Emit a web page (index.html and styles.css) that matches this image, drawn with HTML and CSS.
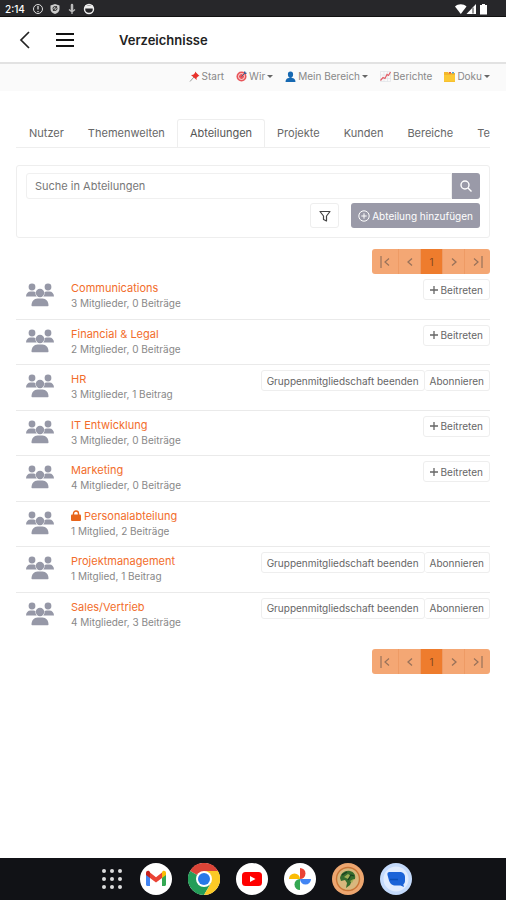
FILE: index.html
```html
<!DOCTYPE html>
<html lang="de">
<head>
    <meta charset="UTF-8">
    <meta name="viewport" content="width=device-width, initial-scale=1">
    <title>Verzeichnisse</title>
    <link rel="stylesheet" href="styles.css">
</head>
<body>
    <svg class="sprite" aria-hidden="true">
        <symbol id="group" viewBox="0 0 28 24">
            <circle cx="6" cy="4" r="3.4"/>
            <circle cx="22" cy="4" r="3.4"/>
            <path d="M0 13.500c0-3 2-5 4.500-5h3c.7 0 1.400.2 2 .5-.3 1.800.2 3.500 1.400 4.500zM28 13.500c0-3-2-5-4.500-5h-3c-.7 0-1.400.2-2 .5.3 1.800-.2 3.500-1.400 4.500z"/>
            <circle cx="14" cy="10" r="4.200"/>
            <path d="M5.500 22.500c0-4 2.500-7 6-7h5c3.500 0 6 3 6 7 0 .5-.3.800-.8.800H6.300c-.5 0-.8-.3-.8-.8z"/>
        </symbol>
        <symbol id="plus" viewBox="0 0 8 8">
            <path d="M4 0v8M0 4h8" fill="none" stroke="currentColor" stroke-width="1.300"/>
        </symbol>
        <symbol id="first" viewBox="0 0 12 12">
            <path d="M2 0v12M10 2.500L6 6l4 3.500" fill="none" stroke="currentColor" stroke-width="1.200"/>
        </symbol>
        <symbol id="prev" viewBox="0 0 12 12">
            <path d="M8 2.500L4 6l4 3.500" fill="none" stroke="currentColor" stroke-width="1.300"/>
        </symbol>
        <symbol id="next" viewBox="0 0 12 12">
            <path d="M4 2.500L8 6 4 9.500" fill="none" stroke="currentColor" stroke-width="1.300"/>
        </symbol>
        <symbol id="last" viewBox="0 0 12 12">
            <path d="M10 0v12M2 2.500L6 6 2 9.500" fill="none" stroke="currentColor" stroke-width="1.200"/>
        </symbol>
    </svg>

    <div class="statusbar">
        <span class="clock">2:14</span>
        <svg width="12" height="12" viewBox="0 0 12 12" fill="none" stroke="#ddd"><circle cx="6" cy="6" r="4.500"/><path d="M6 3v3.500M6 8v1" stroke-width="1.300"/></svg>
        <svg width="12" height="12" viewBox="0 0 12 12"><path d="M6 1l4.500 1.500V6c0 2.500-2 4.300-4.500 5-2.500-.7-4.500-2.500-4.500-5V2.500z" fill="#ccc"/><circle cx="6" cy="5.500" r="2" fill="none" stroke="#333"/><path d="M4 8l4-5" stroke="#333"/></svg>
        <svg width="12" height="12" viewBox="0 0 12 12" fill="none" stroke="#bbb"><path d="M6 2v5" stroke-width="2.500" stroke-linecap="round"/><path d="M3 6.500L6 9l3-2.500M6 9v2" stroke-width="1.300"/></svg>
        <svg width="12" height="12" viewBox="0 0 12 12"><circle cx="6" cy="6" r="4.500" fill="none" stroke="#eee" stroke-width="1.400"/><path d="M2 2.500h8V5.500H2z" fill="#eee"/></svg>
        <svg class="signals" width="34" height="12" viewBox="0 0 34 12" fill="#fff"><path d="M0 3.500c3-3 8.500-3 11.500 0L5.800 11z"/><path d="M21 1v10H11.500z"/><path d="M18 4.500v6" stroke="#777" stroke-width="1.500"/><path d="M27 1h3v1h2v9.500h-7V2h2z"/></svg>
    </div>

    <header class="appbar">
        <button type="button" aria-label="Zurück">
            <svg width="12" height="18" viewBox="0 0 12 18" fill="none" stroke="#222" stroke-width="1.700"><path d="M11 1L3 9l8 8"/></svg>
        </button>
        <button type="button" aria-label="Menü">
            <svg width="18" height="18" viewBox="0 0 18 18" stroke="#111" stroke-width="2"><path d="M0 3h18M0 9h18M0 15h18"/></svg>
        </button>
        <h1>Verzeichnisse</h1>
    </header>

    <nav class="topnav">
        <a href="#">
            <svg width="11" height="11" viewBox="0 0 11 11"><path d="M5 6L1 10.500" stroke="#999"/><path d="M6 .5L10.500 5l-1.300.3-1.700 1.600.2 2.100L2 4l2.200-.2L6 2z" fill="#e8322b"/></svg>
            Start
        </a>
        <a href="#">
            <svg width="11" height="11" viewBox="0 0 11 11"><circle cx="5.500" cy="5.500" r="5" fill="#e8555a"/><circle cx="5.500" cy="5.500" r="3" fill="none" stroke="#fff" stroke-width=".8"/><path d="M5.500 5.500L9 2" stroke="#4c5f86"/><path d="M8 3V1l1-1 .5 1.500L11 2l-1 1z" fill="#3d5a91"/></svg>
            Wir <i class="caret"></i>
        </a>
        <a href="#">
            <svg width="11" height="11" viewBox="0 0 11 11" fill="#1769b2"><path d="M5.500.5c1.800 0 2.700 1.200 2.600 3C8 5.500 7 7 5.500 7S3 5.500 2.900 3.500C2.800 1.700 3.700.5 5.500.5z"/><path d="M.5 11c0-2.800 1.600-3.700 3.500-4h3c1.900.3 3.500 1.200 3.500 4z"/></svg>
            Mein Bereich <i class="caret"></i>
        </a>
        <a href="#">
            <svg width="11" height="11" viewBox="0 0 11 11" fill="none"><path d="M.5.500h10v10H.5zM.5 4h10M.5 7.500h10M4 .5v10M7.500.5v10" stroke="#dfe3e6" stroke-width=".7"/><path d="M.5 9.500L3 6.500l2 1 2-4 1.500 1L10.500 1" stroke="#e2606a" stroke-width="1.200"/></svg>
            Berichte
        </a>
        <a href="#">
            <svg width="11" height="11" viewBox="0 0 11 11"><path d="M0 1h4l1 1h6v9H0z" fill="#f3b72c"/><path d="M5 1h2v1.500H5z" fill="#e05252"/><path d="M8 1h2v1.500H8z" fill="#53a5d8"/><path d="M0 4h11v6.500H0z" fill="#fbc935"/></svg>
            Doku <i class="caret"></i>
        </a>
    </nav>

    <main>
        <nav class="tabs">
            <a href="#">Nutzer</a>
            <a href="#">Themenwelten</a>
            <a href="#" class="active">Abteilungen</a>
            <a href="#">Projekte</a>
            <a href="#">Kunden</a>
            <a href="#">Bereiche</a>
            <a href="#">Te</a>
        </nav>

        <form class="search">
            <div class="search-field">
                <input type="text" placeholder="Suche in Abteilungen" aria-label="Suche in Abteilungen">
                <button type="submit" aria-label="Suchen">
                    <svg width="12" height="12" viewBox="0 0 12 12" fill="none" stroke="#fff" stroke-width="1.400"><circle cx="5" cy="5" r="4"/><path d="M8 8l3.500 3.500"/></svg>
                </button>
            </div>
            <div class="search-actions">
                <button type="button" class="filter" aria-label="Filter">
                    <svg width="12" height="12" viewBox="0 0 12 12" fill="none" stroke="#444" stroke-width="1.200" stroke-linejoin="round"><path d="M1 1.500h10L7.500 6v5l-3-1.500V6z"/></svg>
                </button>
                <button type="button" class="add">
                    <svg width="12" height="12" viewBox="0 0 12 12" fill="none" stroke="#fff"><circle cx="6" cy="6" r="5.200"/><path d="M6 3.300v5.400M3.300 6h5.400"/></svg>
                    Abteilung hinzufügen
                </button>
            </div>
        </form>

        <nav class="pages" aria-label="Seiten">
            <a href="#" class="end" aria-label="Erste"><svg width="12" height="12"><use href="#first"/></svg></a>
            <a href="#" aria-label="Vorherige"><svg width="12" height="12"><use href="#prev"/></svg></a>
            <a href="#" class="current">1</a>
            <a href="#" aria-label="Nächste"><svg width="12" height="12"><use href="#next"/></svg></a>
            <a href="#" class="end" aria-label="Letzte"><svg width="12" height="12"><use href="#last"/></svg></a>
        </nav>

        <ul class="groups">
            <li>
                <svg class="group-icon"><use href="#group"/></svg>
                <div class="info"><a href="#">Communications</a><p>3 Mitglieder, 0 Beiträge</p></div>
                <div class="actions"><button type="button" class="join"><svg width="8" height="8"><use href="#plus"/></svg>Beitreten</button></div>
            </li>
            <li>
                <svg class="group-icon"><use href="#group"/></svg>
                <div class="info"><a href="#">Financial &amp; Legal</a><p>2 Mitglieder, 0 Beiträge</p></div>
                <div class="actions"><button type="button" class="join"><svg width="8" height="8"><use href="#plus"/></svg>Beitreten</button></div>
            </li>
            <li>
                <svg class="group-icon"><use href="#group"/></svg>
                <div class="info"><a href="#">HR</a><p>3 Mitglieder, 1 Beitrag</p></div>
                <div class="actions"><button type="button">Gruppenmitgliedschaft beenden</button><button type="button">Abonnieren</button></div>
            </li>
            <li>
                <svg class="group-icon"><use href="#group"/></svg>
                <div class="info"><a href="#">IT Entwicklung</a><p>3 Mitglieder, 0 Beiträge</p></div>
                <div class="actions"><button type="button" class="join"><svg width="8" height="8"><use href="#plus"/></svg>Beitreten</button></div>
            </li>
            <li>
                <svg class="group-icon"><use href="#group"/></svg>
                <div class="info"><a href="#">Marketing</a><p>4 Mitglieder, 0 Beiträge</p></div>
                <div class="actions"><button type="button" class="join"><svg width="8" height="8"><use href="#plus"/></svg>Beitreten</button></div>
            </li>
            <li>
                <svg class="group-icon"><use href="#group"/></svg>
                <div class="info"><a href="#"><svg width="10" height="11" viewBox="0 0 10 11"><path d="M2.500 5V3.500a2.500 2.500 0 015 0V5" fill="none" stroke="#e8651a" stroke-width="1.400"/><rect y="4.500" width="10" height="6.500" rx="1" fill="#e8651a"/></svg>Personalabteilung</a><p>1 Mitglied, 2 Beiträge</p></div>
            </li>
            <li>
                <svg class="group-icon"><use href="#group"/></svg>
                <div class="info"><a href="#">Projektmanagement</a><p>1 Mitglied, 1 Beitrag</p></div>
                <div class="actions"><button type="button">Gruppenmitgliedschaft beenden</button><button type="button">Abonnieren</button></div>
            </li>
            <li>
                <svg class="group-icon"><use href="#group"/></svg>
                <div class="info"><a href="#">Sales/Vertrieb</a><p>4 Mitglieder, 3 Beiträge</p></div>
                <div class="actions"><button type="button">Gruppenmitgliedschaft beenden</button><button type="button">Abonnieren</button></div>
            </li>
        </ul>

        <nav class="pages" aria-label="Seiten">
            <a href="#" class="end" aria-label="Erste"><svg width="12" height="12"><use href="#first"/></svg></a>
            <a href="#" aria-label="Vorherige"><svg width="12" height="12"><use href="#prev"/></svg></a>
            <a href="#" class="current">1</a>
            <a href="#" aria-label="Nächste"><svg width="12" height="12"><use href="#next"/></svg></a>
            <a href="#" class="end" aria-label="Letzte"><svg width="12" height="12"><use href="#last"/></svg></a>
        </nav>
    </main>

    <footer class="dock">
        <!-- All apps -->
        <svg width="24" height="32" viewBox="4 0 24 32" fill="#ddd"><circle cx="8" cy="8" r="2"/><circle cx="16" cy="8" r="2"/><circle cx="24" cy="8" r="2"/><circle cx="8" cy="16" r="2"/><circle cx="16" cy="16" r="2"/><circle cx="24" cy="16" r="2"/><circle cx="8" cy="24" r="2"/><circle cx="16" cy="24" r="2"/><circle cx="24" cy="24" r="2"/></svg>
        <!-- Mail -->
        <svg width="32" height="32" viewBox="0 0 32 32"><circle cx="16" cy="16" r="16" fill="#fff"/><path d="M6 11l4 3v9H7.500C6.600 23 6 22.400 6 21.500z" fill="#4285f4"/><path d="M26 11l-4 3v9h2.500c.9 0 1.500-.6 1.500-1.500z" fill="#34a853"/><path d="M10 9.500l6 4.700 6-4.700V15l-6 4.500-6-4.500z" fill="#ea4335"/><path d="M6 12v-2c0-2 2-2.700 3.300-1.700l.7.600V15z" fill="#c5221f"/><path d="M26 12v-2c0-2-2-2.700-3.300-1.700l-.7.600V15z" fill="#fbbc04"/></svg>
        <!-- Browser -->
        <svg width="32" height="32" viewBox="0 0 32 32"><circle cx="16" cy="16" r="16" fill="#fff"/><path d="M16 16L2.100 8A16 16 0 0129.900 8z" fill="#db4437"/><path d="M16 16L2.100 8A16 16 0 0016 32l7-12z" fill="#249d58"/><path d="M16 8h13.900A16 16 0 0116 32l7-12z" fill="#fbc926"/><circle cx="16" cy="16" r="8" fill="#fff"/><circle cx="16" cy="16" r="6" fill="#2879e8"/></svg>
        <!-- Video -->
        <svg width="32" height="32" viewBox="0 0 32 32"><circle cx="16" cy="16" r="16" fill="#fff"/><rect x="6" y="9" width="20" height="14" rx="3.500" fill="#f00"/><path d="M14 13l5.500 3-5.500 3z" fill="#fff"/></svg>
        <!-- Photos -->
        <svg width="32" height="32" viewBox="0 0 32 32"><circle cx="16" cy="16" r="16" fill="#fff"/><path d="M16 5a5.500 5.500 0 010 11z" fill="#ea4335"/><path d="M27 16a5.500 5.500 0 01-11 0z" fill="#4285f4"/><path d="M16 27a5.500 5.500 0 010-11z" fill="#34a853"/><path d="M5 16a5.500 5.500 0 0111 0z" fill="#fbbc04"/></svg>
        <!-- Intranet -->
        <svg width="32" height="32" viewBox="0 0 32 32"><circle cx="16" cy="16" r="16" fill="#eda66f"/><circle cx="16" cy="16" r="11.500" fill="#d9b77d" stroke="#c87537" stroke-width="1.400"/><path d="M8 15c1-5 5-8 10-7 4 1 6 4 5 8l-3 1-2 5-4 3 1-5-2-3-4 1z" fill="#356b2d"/><path d="M12 14l4-3 3 2-3 3zM18 18l4-2-2 4z" fill="#9fae56"/><path d="M10 12l5-3M16 17l3-5 3 1" fill="none" stroke="#193e20" stroke-width="1.300"/></svg>
        <!-- Messages -->
        <svg width="32" height="32" viewBox="0 0 32 32"><circle cx="16" cy="16" r="16" fill="#c4dafc"/><circle cx="16" cy="16" r="12.500" fill="#e1ecff"/><path d="M13 9h7c3 0 5 2.200 5 5v4c0 1.500-.7 2.700-1.700 3.500L24 24l-3.500-1.500H16c-4 0-6-2-7-5L7.500 12C7 10.300 8 9 9.500 9z" fill="#1b63d8"/><path d="M10 16.500h8" stroke="#0b4fb8" stroke-width="1.500"/></svg>
    </footer>
</body>
</html>
```

FILE: styles.css
```css
* {
    box-sizing: border-box;
}

body {
    margin: 0;
    min-height: 100vh;
    display: flex;
    flex-direction: column;
    font-family: Inter, "Liberation Sans", sans-serif;
    font-size: 10px;
    line-height: 14px;
    color: #666;
    background-color: #fff;
}

a {
    color: inherit;
    text-decoration: none;
}

button,
input {
    font: inherit;
    color: inherit;
}

button {
    display: flex;
    align-items: center;
    justify-content: center;
    padding: 0;
    border: none;
    background: none;
    white-space: nowrap;
    cursor: pointer;
}

svg {
    display: block;
    flex: none;
}

.sprite {
    position: absolute;
    width: 0;
    height: 0;
}

/* Status bar and header */
.statusbar {
    display: flex;
    align-items: center;
    gap: 5px;
    height: 17px;
    padding: 2px 17px 0 5px;
    color: #fff;
    background-color: #27272a;
    border-bottom: 1px solid #111;
}

.clock {
    width: 22px;
    font-weight: 500;
}

.signals {
    margin-left: auto;
}

.appbar {
    display: flex;
    align-items: center;
    height: 47px;
    padding: 0 18px;
    border-bottom: 2px solid #e2e2e2;
}

.appbar button + button {
    margin-left: 26px;
}

.appbar h1 {
    margin: 0 0 0 45px;
    font-size: 13px;
    font-weight: 600;
    color: #222;
}

.topnav {
    display: flex;
    justify-content: flex-end;
    gap: 12px;
    padding: 5px 16px 8px;
    color: #888;
    background-color: #fafafa;
}

.topnav a {
    display: flex;
    align-items: center;
    gap: 2px;
}

.caret {
    border: 3px solid transparent;
    border-top-color: #666;
    border-bottom: none;
}

/* Content */
main {
    padding: 28px 16px;
}

.tabs {
    display: flex;
    padding-left: 1px;
    overflow: hidden;
    font-size: 11px;
    border-bottom: 1px solid #eee;
}

.tabs a {
    padding: 6px 11px 7px;
    border: 1px solid transparent;
    border-bottom: none;
    border-radius: 3px 3px 0 0;
}

.tabs .active {
    padding-left: 12px;
    padding-right: 12px;
    color: #555;
    border-color: #eee;
}

.search {
    margin-top: 17px;
    padding: 7px 9px 9px;
    border: 1px solid #eee;
    border-radius: 3px;
}

.search-field {
    display: flex;
    height: 26px;
}

.search-field input {
    flex: 1;
    min-width: 0;
    padding: 0 8px;
    font-size: 11px;
    border: 1px solid #f0f0f0;
    border-radius: 3px 0 0 3px;
}

.search-field input::placeholder {
    color: #777;
    opacity: 1;
}

.search-field button {
    width: 28px;
    background-color: #9a9aa8;
    border-radius: 0 3px 3px 0;
}

.search-actions {
    display: flex;
    justify-content: flex-end;
    gap: 12px;
    margin-top: 4px;
}

.search-actions button {
    height: 25px;
    border-radius: 3px;
}

.search-actions .filter {
    width: 29px;
    border: 1px solid #eee;
}

.search-actions .add {
    gap: 2px;
    padding: 0 7px;
    color: #fff;
    background-color: #9a9aa8;
}

.pages {
    display: flex;
    width: max-content;
    margin: 11px 0 0 auto;
    overflow: hidden;
    color: #98725a;
    background-color: #f4a774;
    border-radius: 3px;
}

.pages a {
    display: flex;
    align-items: center;
    justify-content: center;
    width: 22px;
    height: 25px;
    border-left: 1px solid #ee9b65;
}

.pages .end {
    width: 26px;
}

.pages .end:first-child {
    border-left: none;
}

.pages .current {
    color: #84451d;
    background-color: #ee7c2d;
}

/* Every group row gets the same share of the list */
.groups {
    display: grid;
    grid-auto-rows: 1fr;
    min-height: 364px;
    margin: 0;
    padding: 0;
    list-style: none;
}

.groups li {
    display: flex;
    align-items: flex-start;
    padding: 5px 0 5px 10px;
    border-bottom: 1px solid #eaeaea;
}

.groups li:last-child {
    border-bottom: none;
}

.group-icon {
    width: 28px;
    height: 24px;
    margin: 4px 17px 0 0;
    fill: #9698a7;
}

.info {
    flex: 1;
    margin-top: 1px;
    color: #888;
}

.info a {
    display: flex;
    align-items: center;
    gap: 3px;
    font-size: 11px;
    line-height: 16px;
    color: #f26d2b;
}

.info p {
    margin: 0;
}

.actions {
    display: flex;
}

.actions button {
    gap: 3px;
    height: 21px;
    padding: 0 5px;
    border: 1px solid #eee;
    border-radius: 3px;
}

.actions button + button {
    border-left: none;
}

.actions .join {
    padding: 0 6px;
}

/* Launcher */
.dock {
    display: flex;
    align-items: center;
    justify-content: center;
    gap: 16px;
    height: 42px;
    margin-top: auto;
    padding-left: 6px;
    background-color: #111216;
}
```
